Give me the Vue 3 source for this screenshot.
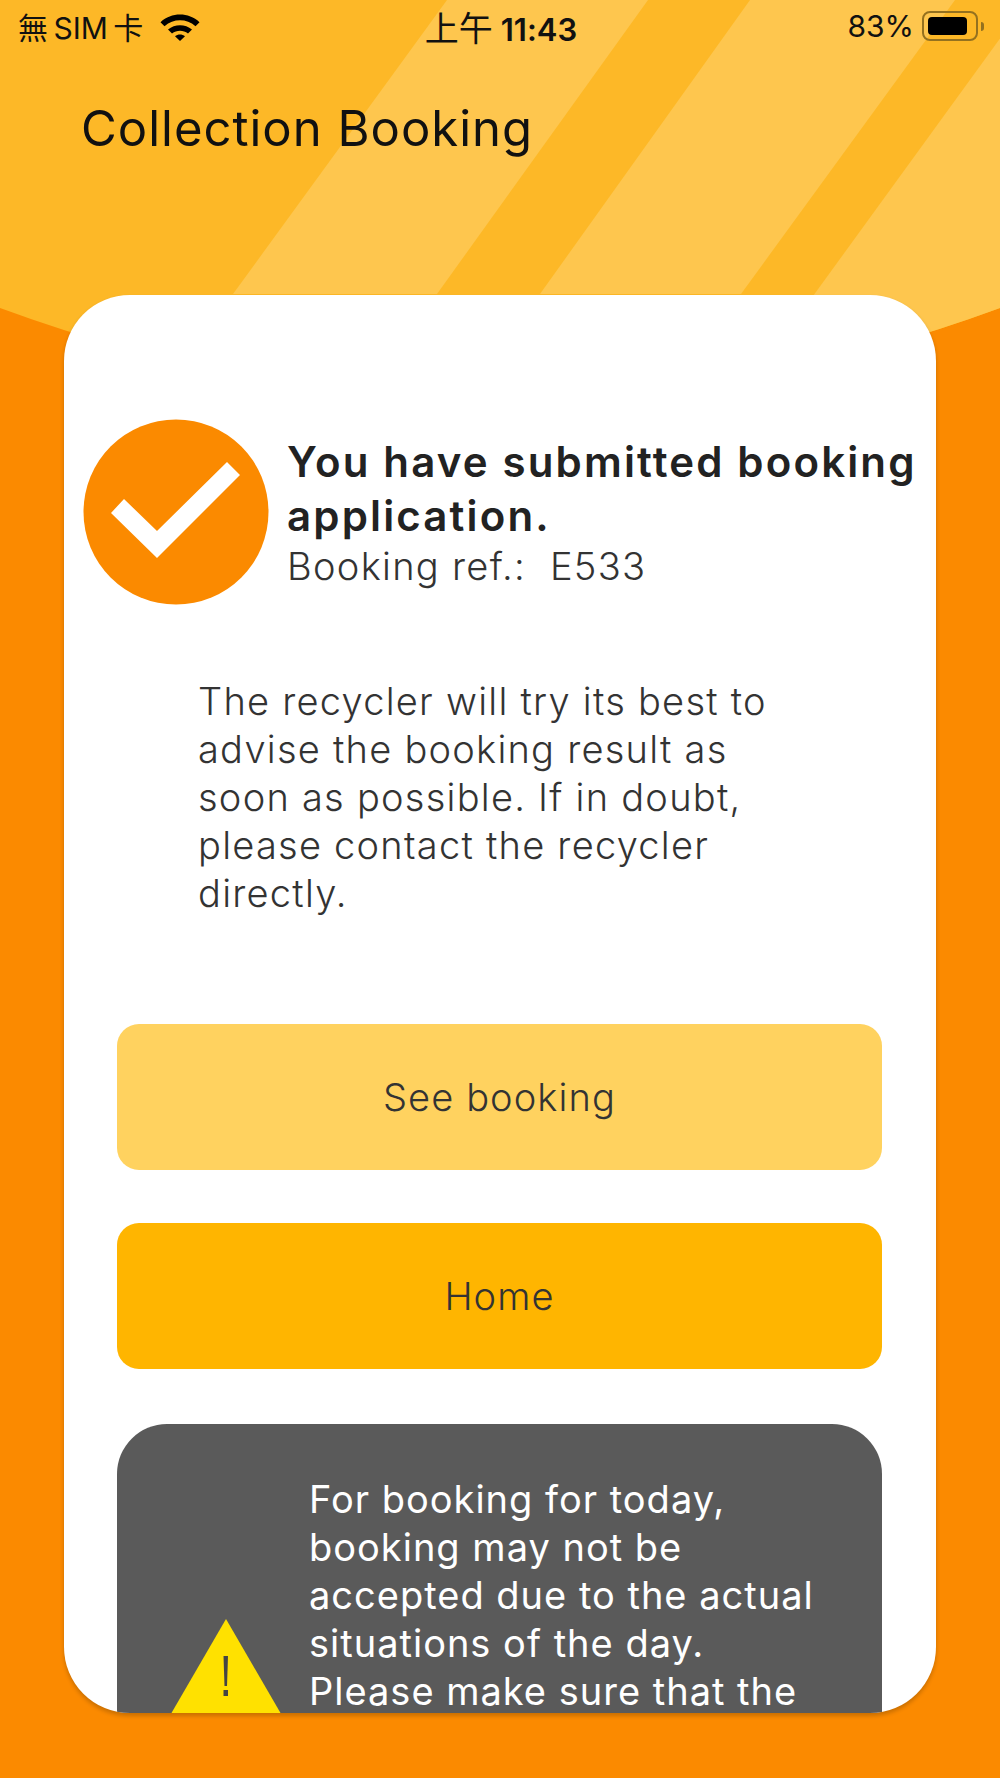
<template>
  <div class="page">
    <svg class="backdrop" width="1000" height="420" viewBox="0 0 1000 420">
      <defs>
        <clipPath id="arc">
          <path d="M0 0H1000V308Q500 492 0 308Z" />
        </clipPath>
      </defs>
      <g clip-path="url(#arc)">
        <rect width="1000" height="420" fill="#fdb827" />
        <polygon v-for="s in stripes" :key="s" :points="s" fill="#fec64e" />
      </g>
    </svg>

    <div class="status">
      <div class="status-side">
        <span class="carrier">無 SIM 卡</span>
        <svg class="wifi" width="40" height="29" viewBox="0 0 40 29">
          <path d="M0.5 10.2C11.5 0 28.500 0 39.500 10.200L35.500 14.200C26.500 6.300 13.500 6.300 4.500 14.200Z" />
          <path d="M8 17.500C14.800 11.800 25.200 11.800 32 17.500L28 21.500C23.300 17.800 16.700 17.800 12 21.500Z" />
          <path d="M15 24.200C17.800 22 22.200 22 25 24.200L20 29Z" />
        </svg>
      </div>
      <span class="time"><span class="time-cjk">上午</span> 11:43</span>
      <div class="status-side right">
        <span class="percent">83%</span>
        <div class="battery"><div class="battery-fill"></div></div>
        <div class="battery-nub"></div>
      </div>
    </div>

    <h1 class="title">Collection Booking</h1>

    <main class="card">
      <section class="result">
        <svg class="tick" width="186" height="186" viewBox="0 0 186 186">
          <circle cx="93" cy="93" r="92.500" fill="#fb8a00" />
          <path d="M28 94L41 80L74 112L144 43L157 56L74 139Z" fill="#fff" />
        </svg>
        <div class="result-text">
          <h2>You have submitted booking application.</h2>
          <p>Booking ref.:&nbsp;&nbsp;E533</p>
        </div>
      </section>

      <p class="note">The recycler will try its best to advise the booking result as soon as possible. If in doubt, please contact the recycler directly.</p>

      <button class="btn see">See booking</button>
      <button class="btn home">Home</button>

      <section class="warning">
        <svg class="warn-icon" width="116" height="100" viewBox="0 0 116 100">
          <polygon points="58,0 116,100 0,100" fill="#ffe100" />
          <path d="M55.500 37H60L59 67H56.500Z" fill="#444" />
          <rect x="55.500" y="71" width="4.500" height="6" fill="#444" />
        </svg>
        <p>For booking for today, booking may not be accepted due to the actual situations of the day.<br />Please make sure that the</p>
      </section>
    </main>
  </div>
</template>

<script setup>
const stripes = [
  '447,0 648,0 437,294 233,294',
  '750,0 955,0 741,294 540,294',
  '1028,0 1100,0 1100,420 723,420',
]
</script>

<style>
html, body { margin: 0; }
</style>

<style scoped>
.page {
  position: relative;
  width: 1000px;
  height: 1778px;
  overflow: hidden;
  background: #fb8a00;
  font-family: Inter, "Noto Sans CJK TC", sans-serif;
  font-feature-settings: "calt" 0;
  color: #222;
}
.backdrop {
  position: absolute;
  top: 0;
  left: 0;
}
.status {
  position: relative;
  display: grid;
  grid-template-columns: 1fr auto 1fr;
  align-items: center;
  height: 52px;
  padding: 0 16px 0 18px;
  font-size: 30px;
  color: #111;
}
.status-side {
  display: flex;
  align-items: center;
  gap: 17px;
}
.status-side.right {
  justify-content: flex-end;
  gap: 0;
}
.carrier { word-spacing: -3px; }
.wifi path { fill: #000; }
.time {
  font-size: 31px;
  font-weight: 600;
}
.time-cjk {
  font-size: 34px;
  font-weight: 400;
}
.battery {
  width: 56px;
  height: 30px;
  margin-left: 8px;
  padding: 4px;
  box-sizing: border-box;
  border: 2px solid #94711f;
  border-radius: 8px;
}
.battery-fill {
  width: 39px;
  height: 100%;
  background: #000;
  border-radius: 4px;
}
.battery-nub {
  width: 3px;
  height: 9px;
  margin-left: 3px;
  background: #94711f;
  border-radius: 0 3px 3px 0;
}
.title {
  position: relative;
  margin: 47px 0 0 81px;
  height: 196px;
  font-size: 49px;
  line-height: 60px;
  font-weight: 400;
  letter-spacing: 1px;
  color: #111;
}
.card {
  position: relative;
  display: flex;
  flex-direction: column;
  height: 1418px;
  margin: 0 64px;
  overflow: hidden;
  background: #fff;
  border-radius: 66px;
  box-shadow: 0 3px 4px rgba(0, 0, 0, 0.2);
}
.result {
  display: flex;
  flex: none;
  align-items: center;
  gap: 18px;
  padding: 124px 0 0 19px;
}
.tick { flex: none; }
.result-text h2 {
  margin: 0;
  font-size: 42px;
  line-height: 54px;
  font-weight: 600;
  letter-spacing: 2.15px;
}
.result-text p {
  margin: 0;
  font-size: 38px;
  line-height: 46px;
  font-weight: 350;
  letter-spacing: 1.3px;
  color: #333;
}
.note {
  flex: none;
  margin: 72px 0 0 134px;
  width: 590px;
  font-size: 38px;
  line-height: 48px;
  font-weight: 350;
  letter-spacing: 1.25px;
  color: #333;
}
.btn {
  display: block;
  flex: none;
  width: 765px;
  height: 146px;
  margin: 0 0 0 53px;
  border: 0;
  border-radius: 22px;
  font: inherit;
  font-size: 38px;
  font-weight: 350;
  letter-spacing: 1.1px;
  color: #333;
}
.see {
  margin-top: 107px;
  background: #ffd25f;
}
.home {
  margin-top: 53px;
  background: #ffb500;
}
.warning {
  display: flex;
  flex: none;
  align-items: center;
  gap: 25px;
  box-sizing: border-box;
  width: 765px;
  height: 490px;
  margin: 55px 0 0 53px;
  padding: 51px 60px 0 51px;
  background: #5a5a5a;
  border-radius: 50px;
}
.warn-icon { flex: none; margin-top: -51px; }
.warning p {
  align-self: flex-start;
  margin: 0;
  font-size: 38px;
  line-height: 48px;
  letter-spacing: 1px;
  color: #fff;
}
</style>
